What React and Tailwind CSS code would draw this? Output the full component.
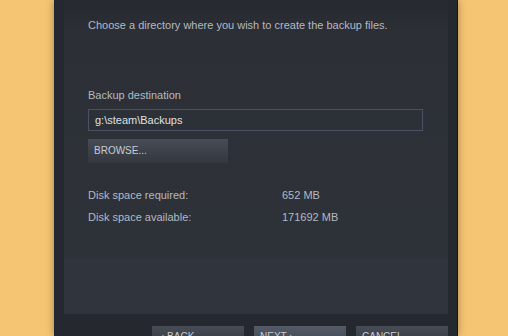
export default function App() {
  const font = { fontFamily: '"Liberation Sans", Arial, sans-serif' };
  return (
    <div className="w-[508px] h-[336px] bg-[#f6c574] overflow-hidden flex" style={font}>
      <div className="ml-[54px] w-[404px] h-[336px] bg-[#25282e] border-l border-[#1c2638] border-r border-r-[#15171b] shadow-[0_0_8px_rgba(0,0,0,0.35)] flex flex-col">
        <div className="ml-[9px] w-[384px] h-[314px] shrink-0 flex flex-col bg-gradient-to-b from-[#272a30] from-[2%] via-[#2c3036] via-[10%] to-[#2e3239]">
          <div className="flex-1 pl-[24px] pt-[18px] text-[11px] text-[#b4b9c2] leading-[14px]">
            <div>Choose a directory where you wish to create the backup files.</div>
            <div className="mt-[56px]">Backup destination</div>
            <div className="mt-[7px] w-[335px] h-[22px] border border-[#4b5064] flex items-center pl-[6px] text-[#dde1e6]">
              g:\steam\Backups
            </div>
            <div className="mt-[8px] w-[140px] h-[24px] bg-gradient-to-b from-[#474c56] to-[#33373e] flex items-center pl-[6px] text-[10px] text-[#c8ccd3]">
              BROWSE...
            </div>
            <div className="mt-[25px] flex">
              <div className="w-[194px]">Disk space required:</div>
              <div>652 MB</div>
            </div>
            <div className="mt-[8px] flex">
              <div className="w-[194px]">Disk space available:</div>
              <div>171692 MB</div>
            </div>
          </div>
          <div className="h-[56px] bg-[#30343c]"></div>
        </div>
        <div className="mt-[12px] ml-[97px] flex gap-[10px] text-[10px] leading-none text-[#c8ccd3]">
          <div className="w-[92px] h-[10px] bg-gradient-to-b from-[#474c56] to-[#3d424a] pl-[9px] pt-[6px] overflow-hidden">‹ BACK</div>
          <div className="w-[92px] h-[10px] bg-gradient-to-b from-[#555b67] to-[#4a505a] pl-[6px] pt-[6px] overflow-hidden">NEXT ›</div>
          <div className="w-[92px] h-[10px] bg-gradient-to-b from-[#474c56] to-[#3d424a] pl-[6px] pt-[6px] overflow-hidden">CANCEL</div>
        </div>
      </div>
    </div>
  );
}
